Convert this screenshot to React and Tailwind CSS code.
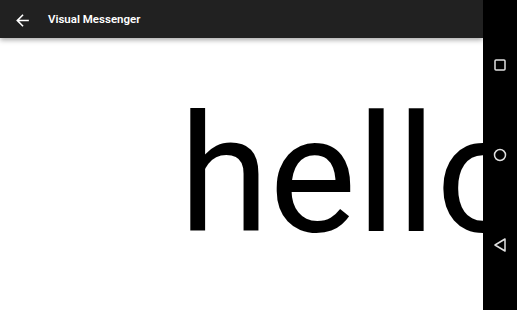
import React from "react";

function NavBar() {
    return (
        <div className="w-[34px] h-full bg-black flex flex-col items-center justify-between py-[58px] pb-[57px]">
            <svg width="14" height="14" viewBox="0 0 14 14" fill="none" stroke="#e0e0e0" strokeWidth="1.5">
                <rect x="2" y="2" width="10" height="10" rx="1" />
            </svg>
            <svg width="16" height="16" viewBox="0 0 16 16" fill="none" stroke="#e0e0e0" strokeWidth="1.5">
                <circle cx="8" cy="8" r="5.5" />
            </svg>
            <svg width="16" height="16" viewBox="0 0 16 16" fill="none" stroke="#e0e0e0" strokeWidth="1.5" strokeLinejoin="round">
                <path d="M13 2 L3 8 L13 14 Z" />
            </svg>
        </div>
    );
}

export default function App() {
    return (
        <div className="flex w-[517px] h-[310px] bg-white overflow-hidden" style={{ fontFamily: "Roboto, sans-serif" }}>
            <div className="flex-1 flex flex-col relative overflow-hidden">
                <header className="h-[38px] bg-[#212121] flex items-center pl-[13px] pt-[2px] shadow-[0_2px_5px_rgba(0,0,0,0.35)] relative z-10">
                    <svg width="19" height="19" viewBox="0 0 24 24" fill="#ffffff">
                        <path d="M20 11H7.83l5.59-5.59L12 4l-8 8 8 8 1.41-1.41L7.83 13H20v-2z" />
                    </svg>
                    <span className="ml-[16px] text-white text-[11.5px] font-semibold">Visual Messenger</span>
                </header>
                <div className="flex-1 relative">
                    <span className="absolute left-[179px] top-[55px] text-[164px] leading-none text-black whitespace-nowrap">hello</span>
                </div>
            </div>
            <NavBar />
        </div>
    );
}
